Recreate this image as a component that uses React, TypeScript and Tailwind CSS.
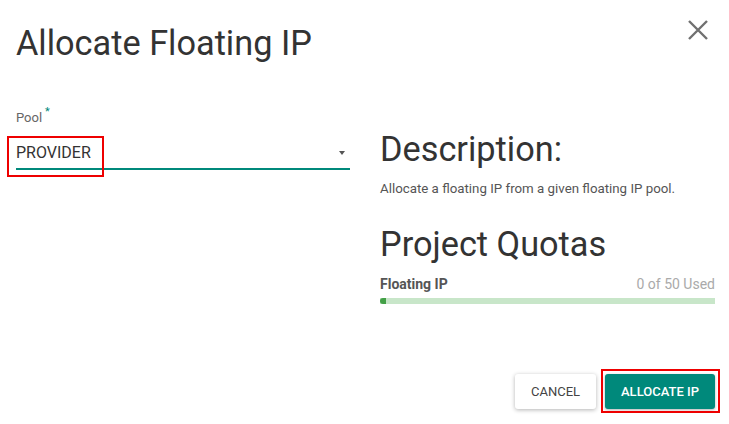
export default function App() {
  return (
    <div className="w-[729px] h-[424px] bg-white font-['Roboto',sans-serif] text-[#333] relative overflow-hidden">
      {/* Header */}
      <div className="pl-4 pr-[21px] pt-[23px] flex items-start justify-between">
        <h1 className="text-[34.3px] leading-[40px] font-normal text-[#333]">Allocate Floating IP</h1>
        <button className="mt-[-3px] text-[#707070]">
          <svg width="20" height="20" viewBox="0 0 20 20" fill="none" stroke="currentColor" strokeWidth="2.4">
            <path d="M1 1L19 19M19 1L1 19" />
          </svg>
        </button>
      </div>

      <div className="flex gap-[30px] pl-4 pr-[14px] mt-[43px]">
        {/* Left column */}
        <div className="w-[334px] pt-[4px]">
          <label className="block text-[13px] leading-[16px] text-[#666]">
            Pool<span className="text-[#00897b] text-[11px] align-top relative top-[-6px] ml-[3px]">*</span>
          </label>
          <div className="relative mt-[4px]">
            <div className="flex items-end justify-between h-[40px] pb-[5px] border-b-2 border-[#00897b]">
              <span className="text-[16px] text-[#333] leading-[20px]">PROVIDER</span>
              <span className="w-0 h-0 mb-[8px] mr-[5px] border-l-[3.5px] border-r-[3.5px] border-t-[4px] border-l-transparent border-r-transparent border-t-[#555]" />
            </div>
            <div className="absolute left-[-9px] top-[6px] w-[97px] h-[41px] border-2 border-[#ee0000]" />
          </div>
        </div>

        {/* Right column */}
        <div className="flex-1 pt-[23px]">
          <h2 className="text-[34.3px] leading-[40px] text-[#333]">Description:</h2>
          <p className="text-[13.3px] text-[#555] mt-[12px] leading-[16px]">
            Allocate a floating IP from a given floating IP pool.
          </p>
          <h2 className="text-[34.3px] leading-[40px] text-[#333] mt-[27px]">Project Quotas</h2>
          <div className="flex justify-between items-end mt-[11px] text-[14px] leading-[18px]">
            <span className="font-bold text-[#555]">Floating IP</span>
            <span className="text-[#aaa]">0 of 50 Used</span>
          </div>
          <div className="mt-[5px] h-[6px] bg-[#c8e6c9]">
            <div className="h-[6px] w-[6px] rounded-l-full bg-[#43a047]" />
          </div>
        </div>
      </div>

      {/* Actions */}
      <div className="absolute right-[14px] top-[374px] flex items-center gap-[9px]">
        <button className="h-[35px] w-[81px] bg-white rounded-[3px] text-[13px] text-[#444] shadow-[0_1px_4px_rgba(0,0,0,0.3)]">
          CANCEL
        </button>
        <div className="relative">
          <button className="h-[35px] w-[110px] bg-[#00897b] rounded-[3px] text-[13px] font-medium text-white shadow-[0_1px_3px_rgba(0,0,0,0.3)]">
            ALLOCATE IP
          </button>
          <div className="absolute left-[-4px] top-[-5px] w-[119px] h-[44px] border-2 border-[#ee0000]" />
        </div>
      </div>
    </div>
  );
}
